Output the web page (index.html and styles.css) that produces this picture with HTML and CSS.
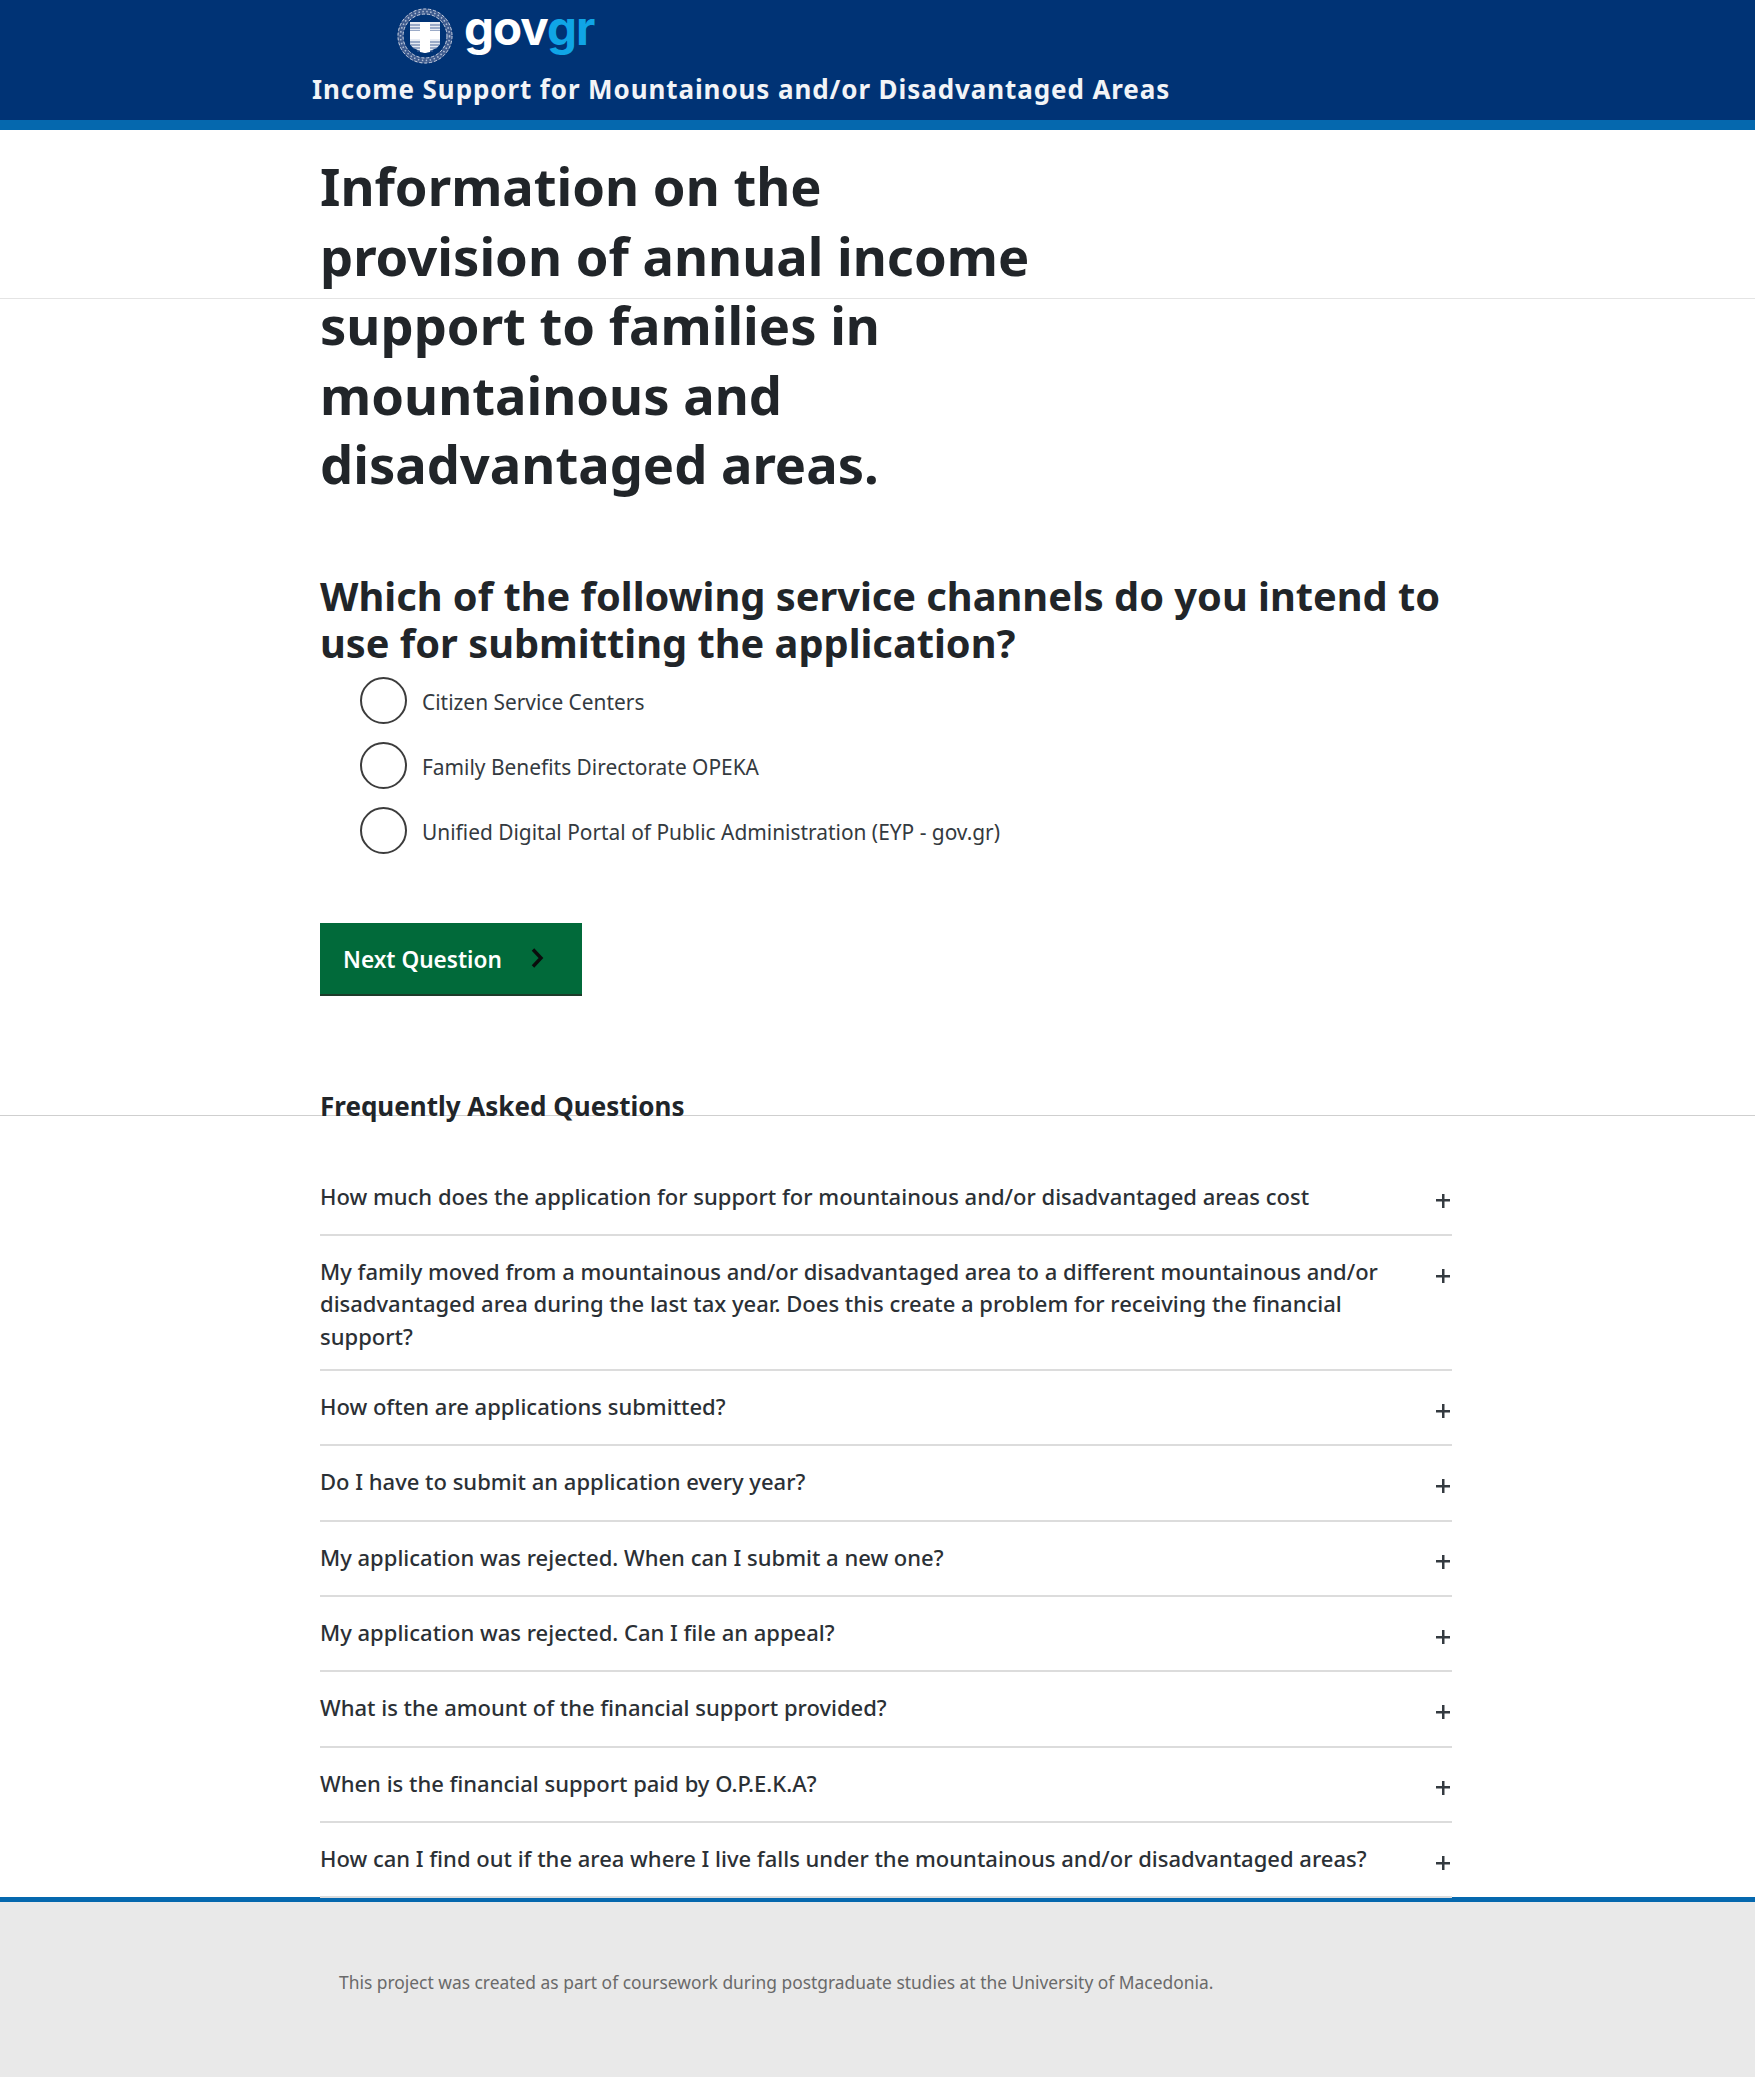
FILE: index.html
```html
<!DOCTYPE html>
<html lang="en">
<head>
    <meta charset="UTF-8">
    <meta name="viewport" content="width=device-width, initial-scale=1.0">
    <link rel="stylesheet" href="styles.css">
    <title>Income Support for Mountainous and/or Disadvantaged Areas</title>
</head>
<body>
    <header class="site-header">
        <div class="header-inner">
            <div class="logo">
                <svg class="emblem" width="56" height="56" viewBox="0 0 56 56">
                    <circle cx="28" cy="28" r="24.500" fill="none" stroke="#3f5c8f" stroke-width="6"/>
                    <circle cx="28" cy="28" r="27" fill="none" stroke="#c8d2e2" stroke-width="1" stroke-dasharray="3 2"/>
                    <circle cx="28" cy="28" r="22" fill="none" stroke="#c8d2e2" stroke-width="1" stroke-dasharray="3 2"/>
                    <circle cx="28" cy="28" r="24.500" fill="none" stroke="#aebcd4" stroke-width="1.600" stroke-dasharray="1.500 2.500"/>
                    <path d="M13 14h30v21c0 4-7 7-15 10-8-3-15-6-15-10z" fill="#e6ebf3"/>
                    <path d="M13 17h30M13 20h30M13 23h30M13 34h30M14 37h28M16 40h24M20 43h16" stroke="#4f6a9c" stroke-width="1.200"/>
                    <path d="M23 14h10v9h10v8H33v13l-5 1-5-1V31H13v-8h10z" fill="#fff"/>
                </svg>
                <span class="wordmark">gov<span class="wordmark-gr">gr</span></span>
            </div>
            <div class="site-title">Income Support for Mountainous and/or Disadvantaged Areas</div>
        </div>
    </header>

    <main class="content">
        <div class="rule rule-top"></div>
        <h1 class="page-title">Information on the provision of annual income support to families in mountainous and disadvantaged areas.</h1>

        <h2 class="question">Which of the following service channels do you intend to use for submitting the application?</h2>
        <div class="options">
            <label class="option"><span class="radio"></span><span class="option-text">Citizen Service Centers</span></label>
            <label class="option"><span class="radio"></span><span class="option-text">Family Benefits Directorate OPEKA</span></label>
            <label class="option"><span class="radio"></span><span class="option-text">Unified Digital Portal of Public Administration (EYP - gov.gr)</span></label>
        </div>

        <button class="next-btn"><span class="next-label">Next Question</span>
            <svg width="14" height="22" viewBox="0 0 14 22"><path d="M3 2.500 11 11 3 19.500" fill="none" stroke="#0b0c0c" stroke-width="3.400"/></svg>
        </button>

        <div class="rule rule-faq"></div>
        <h3 class="faq-heading">Frequently Asked Questions</h3>
        <div class="faq">
            <div class="faq-row"><span class="faq-text">How much does the application for support for mountainous and/or disadvantaged areas cost</span><i class="plus"></i></div>
            <div class="faq-row"><span class="faq-text">My family moved from a mountainous and/or disadvantaged area to a different mountainous and/or disadvantaged area during the last tax year. Does this create a problem for receiving the financial support?</span><i class="plus"></i></div>
            <div class="faq-row"><span class="faq-text">How often are applications submitted?</span><i class="plus"></i></div>
            <div class="faq-row"><span class="faq-text">Do I have to submit an application every year?</span><i class="plus"></i></div>
            <div class="faq-row"><span class="faq-text">My application was rejected. When can I submit a new one?</span><i class="plus"></i></div>
            <div class="faq-row"><span class="faq-text">My application was rejected. Can I file an appeal?</span><i class="plus"></i></div>
            <div class="faq-row"><span class="faq-text">What is the amount of the financial support provided?</span><i class="plus"></i></div>
            <div class="faq-row"><span class="faq-text">When is the financial support paid by O.P.E.K.A?</span><i class="plus"></i></div>
            <div class="faq-row"><span class="faq-text">How can I find out if the area where I live falls under the mountainous and/or disadvantaged areas?</span><i class="plus"></i></div>
        </div>
    </main>

    <footer class="site-footer">
        <p>This project was created as part of coursework during postgraduate studies at the University of Macedonia.</p>
    </footer>
</body>
</html>
```

FILE: styles.css
```css
* {
    box-sizing: border-box;
}

body {
    margin: 0;
    font-family: "Noto Sans", "Open Sans", sans-serif;
    color: #212529;
    background: #fff;
}

.site-header {
    height: 130px;
    background: #003375;
    border-bottom: 10px solid #0568ae;
}

.header-inner {
    width: 1132px;
    margin-left: 311px;
}

.logo {
    display: flex;
    align-items: center;
    height: 72px;
    padding-left: 86px;
}

.wordmark {
    margin-left: 11px;
    margin-top: -16px;
    font-family: "Inter", sans-serif;
    font-size: 47.500px;
    line-height: 56px;
    font-weight: 700;
    letter-spacing: -1px;
    color: #fff;
}

.wordmark-gr {
    color: #10a5e6;
}

.site-title {
    padding-left: 1px;
    font-size: 26px;
    line-height: 34px;
    font-weight: 700;
    letter-spacing: 0.9px;
    color: #f2f4f7;
}

.content {
    position: relative;
    width: 1132px;
    margin-left: 320px;
    padding-top: 21px;
    height: 1767px;
}

.rule {
    position: absolute;
    left: -320px;
    width: 1755px;
    height: 1px;
}

.rule-top {
    top: 168px;
    background: #e4e4e4;
}

.rule-faq {
    top: 985px;
    background: #cfcfcf;
}

.page-title {
    position: relative;
    width: 740px;
    margin: 0;
    font-size: 52.500px;
    line-height: 69.500px;
    font-weight: 700;
}

.question {
    margin: 74px 0 0;
    font-size: 39.750px;
    line-height: 47px;
    font-weight: 700;
}

.options {
    margin-top: 1px;
    padding-left: 40px;
}

.option {
    display: flex;
    align-items: center;
    height: 65px;
    font-size: 20.900px;
    color: #343a40;
}

.option-text {
    margin-top: 4px;
}

.radio {
    width: 47px;
    height: 47px;
    margin-right: 15px;
    border: 2px solid #3c3c3c;
    border-radius: 50%;
}

.next-btn {
    display: flex;
    align-items: center;
    width: 262px;
    height: 73px;
    margin-top: 60px;
    padding: 0 0 0 23px;
    border: none;
    border-bottom: 2px solid #1d3b2a;
    background: #016a3a;
    color: #fff;
    font-family: inherit;
    font-size: 22.600px;
    font-weight: 600;
}

.next-label {
    margin-top: 2px;
}

.next-btn svg {
    margin-left: 28px;
}

.faq-heading {
    position: relative;
    margin: 92px 0 0;
    font-size: 26px;
    line-height: 36px;
    font-weight: 700;
}

.faq {
    margin-top: 37px;
}

.faq-row {
    display: flex;
    justify-content: space-between;
    min-height: 75.300px;
    padding: 19px 0 17px;
    border-bottom: 2px solid #dcdcdc;
    font-size: 22px;
    line-height: 32.400px;
    font-weight: 500;
    color: #2b3035;
}

.faq-text {
    width: 1090px;
}

.plus {
    flex: none;
    width: 14px;
    height: 14px;
    margin: 14px 2px 0 0;
    background:
        linear-gradient(#343a40, #343a40) center / 14px 2.500px no-repeat,
        linear-gradient(#343a40, #343a40) center / 2.500px 14px no-repeat;
}

.site-footer {
    height: 180px;
    padding: 67px 0 0 339px;
    background: #e9e9e9;
    border-top: 5px solid #0568ae;
}

.site-footer p {
    margin: 0;
    font-size: 17.400px;
    line-height: 27px;
    color: #6a6a6a;
}
```
